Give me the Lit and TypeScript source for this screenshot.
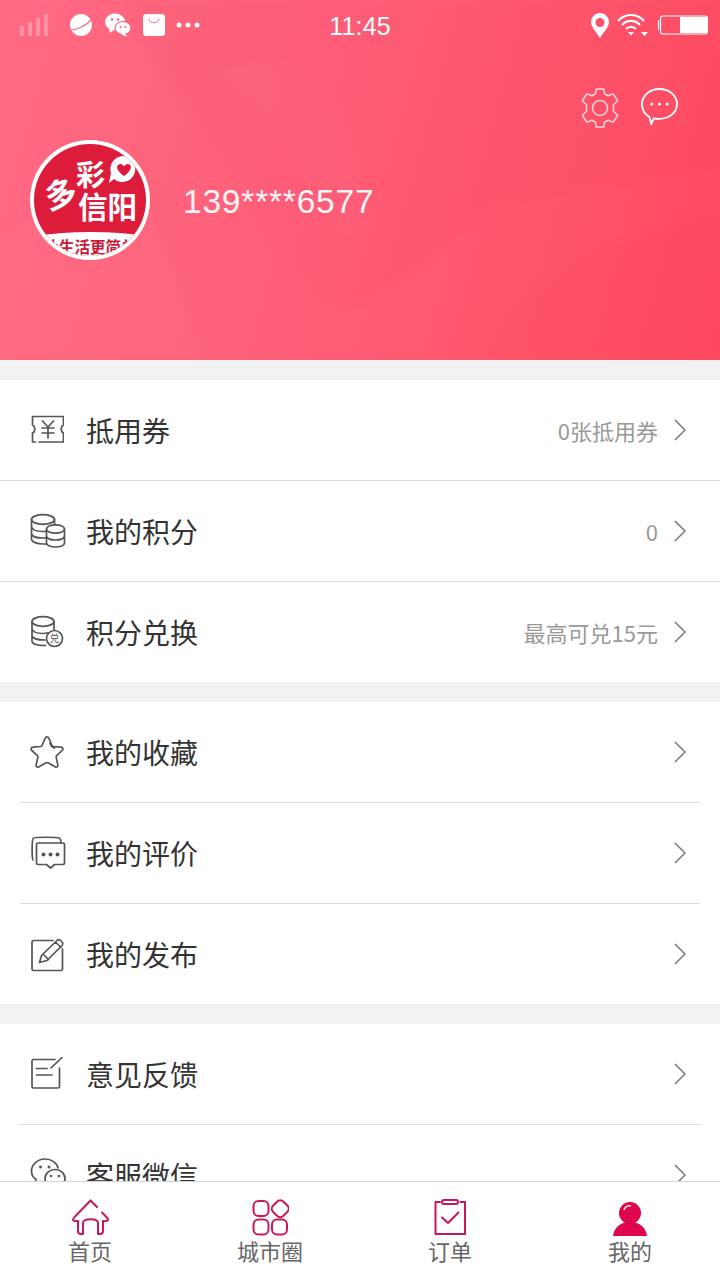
import { LitElement, html, css, svg } from "lit";
import { customElement } from "lit/decorators.js";

const stroke = (body: unknown, w = 34, h = 34, vb = "0 0 34 34") => html`<svg width=${w} height=${h} viewBox=${vb} fill="none" stroke="#555" stroke-width="1.7" stroke-linejoin="round" stroke-linecap="round">${body}</svg>`;

const icons: Record<string, unknown> = {
  ticket: stroke(svg`
    <path d="M5.500 29 H2.500 V20 C5.500 19 5.500 13 2.500 12 V3.500 H33.500 V12 C30.500 13 30.500 19 33.500 20 V29 H9"/>
    <path d="M12.500 8 L18 14 L23.500 8 M18 14 V25 M12 15 H24 M12 20 H24"/>`),
  coins: stroke(svg`
    <ellipse cx="13" cy="6.500" rx="11.500" ry="4.800"/>
    <path d="M1.500 6.500 V26 C1.500 29 7 31 13 31 C14 31 15 31 16.500 30.800 M1.500 13.500 C2 17 7 18.500 13 18.500 L16.500 18.300 M1.500 20.500 C2 23.500 7 25 13 25 L16.500 24.800 M24.500 6.500 V11.500"/>
    <ellipse cx="25.500" cy="16" rx="9" ry="4.200"/>
    <path d="M16.500 16 V30 C16.500 32.500 21 34 25.500 34 C30 34 34.500 32.500 34.500 30 V16 M16.500 23 C17 25.500 21 27 25.500 27 C30 27 34 25.500 34.500 23"/>`, 36, 36, "0 0 36 36"),
  exchange: stroke(svg`
    <ellipse cx="13" cy="6.500" rx="11" ry="4.800"/>
    <path d="M2 6.500 V26 C2 28.500 6.500 30.500 15.500 30.500 M2 13.500 C2.500 17 7 18.500 13 18.500 C15 18.500 16.500 18.300 18 17.800 M2 20.500 C2.500 23.500 6.500 25 15 25 M24 6.500 V15"/>
    <circle cx="24.500" cy="23.500" r="8"/>
    <text x="24.500" y="27" text-anchor="middle" font-size="10" fill="#555" stroke="none" font-family="Noto Sans CJK SC, sans-serif">兑</text>`),
  star: stroke(svg`<path d="M17 1.800 C18 1.800 18.600 2.600 19 3.500 L21.800 10.200 C22.100 11 22.700 11.400 23.500 11.500 L30.800 12.200 C33 12.500 33.500 14.300 32.200 15.500 L26.800 20.400 C26.200 21 26 21.600 26.200 22.400 L27.800 29.800 C28.200 31.700 26.800 32.800 25 31.800 L18.500 28 C17.500 27.500 16.500 27.500 15.600 28 L9 31.800 C7.200 32.800 5.800 31.700 6.200 29.800 L7.800 22.400 C8 21.600 7.800 21 7.200 20.400 L1.800 15.500 C.5 14.300 1 12.500 3.200 12.200 L10.500 11.500 C11.300 11.400 11.900 11 12.200 10.200 L15 3.500 C15.400 2.600 16 1.800 17 1.800 Z M20 8 C20.600 10.500 22 12 24.500 13" /> `),
  review: stroke(svg`
    <path d="M3 25 C2 24 1.500 4 3.500 3 C4 2 28 2 29 3 C30.500 3.500 31 5.500 31 8"/>
    <path d="M8 8 H33 C34 8 34.500 8.500 34.500 9.500 V28 C34.500 29 34 29.500 33 29.500 H24.500 L20.500 33 L16.500 29.500 H8 C7 29.500 6.500 29 6.500 28 V9.500 C6.500 8.500 7 8 8 8 Z"/>
    <circle cx="13.500" cy="19.500" r="2" fill="#555" stroke="none"/><circle cx="20.500" cy="19.500" r="2" fill="#555" stroke="none"/><circle cx="27.500" cy="19.500" r="2" fill="#555" stroke="none"/>`, 36, 36, "0 0 36 36"),
  publish: stroke(svg`
    <path d="M23 4.500 H3.500 C2.500 4.500 2 5 2 6 V33 C2 34 2.500 34.500 3.500 34.500 H31 C32 34.500 32.500 34 32.500 33 V13"/>
    <path d="M9.500 26.500 L11.500 19.500 L27 4.500 C28 3.500 29 3.500 30 4 L32.500 6.500 C33 7.500 33 8.500 32 9.500 L17 24.500 Z M13 18 L18.500 23.500 M25.500 6 L31 11.500"/>`, 36, 36, "0 0 36 36"),
  feedback: stroke(svg`
    <path d="M25 2.500 H3.500 C2.500 2.500 2 3 2 4 V29.500 C2 30.500 2.500 31 3.500 31 H28 C29 31 29.500 30.500 29.500 29.500 V11"/>
    <path d="M21 11 L32 .5 M6.500 11.500 H17 M6.500 18 H22"/>`),
  wechat: stroke(svg`
    <path d="M15 25 C13 25 11.500 24.800 10 24.500 L5 28 L6 22.500 C2.800 20.500 1.500 17 1.500 14 C1.500 7.500 7.500 2 15 2 C21.500 2 27 6 28 11"/>
    <ellipse cx="25" cy="21.500" rx="10" ry="9"/>
    <circle cx="10.500" cy="10" r="1.500" fill="#555" stroke="none"/><circle cx="19" cy="10" r="1.500" fill="#555" stroke="none"/>
    <circle cx="21" cy="19" r="1.300" fill="#555" stroke="none"/><circle cx="29" cy="19" r="1.300" fill="#555" stroke="none"/>`, 36, 36, "0 0 36 36"),
};

type Row = { icon: string; label: string; value?: string };

const groups: { inset: boolean; rows: Row[] }[] = [
  { inset: false, rows: [
    { icon: "ticket", label: "抵用券", value: "0张抵用券" },
    { icon: "coins", label: "我的积分", value: "0" },
    { icon: "exchange", label: "积分兑换", value: "最高可兑15元" },
  ] },
  { inset: true, rows: [
    { icon: "star", label: "我的收藏" },
    { icon: "review", label: "我的评价" },
    { icon: "publish", label: "我的发布" },
  ] },
  { inset: true, rows: [
    { icon: "feedback", label: "意见反馈" },
    { icon: "wechat", label: "客服微信" },
  ] },
];

const tabStroke = "#c8175a";
const tabs = [
  { label: "首页", icon: svg`<path d="M19.500 1.500 L6 15.500 C3 18.500 1.500 20 2 21 C2.500 22.500 7 22 7 22 V32 C7 34 8 35 10 35 H12 V24 C12 19 27 19 27 24 V35 H29 C31 35 32 34 32 32 V22 C32 22 36.500 22.500 37 21 C37.500 20 36 18.500 31 13.500 M19.500 1.500 L26 8"/>`, vb: "0 0 39 37", w: 39, h: 37 },
  { label: "城市圈", icon: svg`
    <rect x="1.500" y="2" width="15" height="15" rx="5"/>
    <rect x="21" y="2.500" width="14.500" height="14.500" rx="4.500" transform="rotate(45 28.250 9.750)"/>
    <rect x="1.500" y="20.500" width="15" height="15" rx="5"/>
    <rect x="20" y="20.500" width="15" height="15" rx="5"/>`, vb: "0 0 37 37", w: 37, h: 37 },
  { label: "订单", icon: svg`
    <path d="M6 3 H1.500 V35 H31 V3 H26.500"/>
    <rect x="8" y="1" width="16" height="4" rx="2"/>
    <path d="M8 18.500 L14 24 L24.500 13.500"/>`, vb: "0 0 33 37", w: 33, h: 37 },
];

@customElement("app-root")
export class AppRoot extends LitElement {
  static styles = css`
    :host { display: flex; flex-direction: column; width: 720px; height: 1280px; overflow: hidden; background: #f2f2f2;
      font-family: "Noto Sans CJK SC", "Liberation Sans", sans-serif; }
    .header { position: relative; flex: none; height: 360px; overflow: hidden; color: #fff; display: flex; flex-direction: column;
      background: linear-gradient(105deg, #ff6a82 0%, #ff5f79 45%, #ff4a60 100%); }
    .swirl { position: absolute; inset: 0; filter: blur(5px); }
    .status, .actions, .profile { position: relative; display: flex; }
    .status { height: 50px; padding: 0 12px 0 20px; justify-content: space-between; align-items: center; }
    .status-side { display: flex; align-items: center; width: 280px; }
    .status-right { width: 288px; justify-content: flex-end; }
    .clock { font-family: "Liberation Sans", sans-serif; font-size: 25px; letter-spacing: .2px; margin-top: 2px; }
    .actions { justify-content: flex-end; align-items: flex-start; gap: 21px; padding: 38px 42px 0 0; height: 40px; }
    .profile { align-items: center; padding: 12px 0 0 30px; gap: 33px; }
    .phone { font-family: "Liberation Sans", sans-serif; font-size: 33.500px; letter-spacing: .8px; margin-top: 3px; color: #fff4f6; }

    .logo { position: relative; width: 120px; height: 120px; border-radius: 50%; background: #fff; overflow: hidden; flex: none; }
    .disc { position: absolute; inset: 4px; border-radius: 50%; overflow: hidden; background: #dd1b3b; }
    .band { position: absolute; left: -18px; top: 88px; width: 150px; height: 70px; border-radius: 50% 50% 0 0 / 14px 14px 0 0; background: #fff; }
    .slogan { position: absolute; left: 0; width: 112px; text-align: center; top: 92px; font-size: 15.500px; font-weight: 700; color: #c8193a; white-space: nowrap; line-height: 20px; }
    .glyph { position: absolute; color: #fff; font-weight: 700; line-height: 1; white-space: nowrap; }
    .g-duo { left: 10px; top: 32px; font-size: 32px; transform: rotate(-16deg); }
    .g-cai { left: 42px; top: 15px; font-size: 29px; }
    .g-xy { left: 44px; top: 47px; font-size: 29.500px; }
    .pin { position: absolute; left: 75px; top: 11px; }

    .list { flex: 1; min-height: 0; overflow: hidden; padding-top: 20px; display: flex; flex-direction: column; gap: 20px; }
    .group { background: #fff; flex: none; }
    .row { height: 100px; display: flex; align-items: center; padding: 0 34px 0 30px; position: relative; }
    .row + .row { margin-top: 1px; }
    .row + .row::before { content: ""; position: absolute; left: 0; right: 0; top: -1px; height: 1px; background: #dcdcdc; }
    .inset .row + .row::before { left: 20px; right: 20px; }
    .row-icon { width: 56px; flex: none; display: flex; }
    .label { font-size: 28px; color: #333; flex: 1; }
    .value { font-size: 22px; color: #999; margin-right: 16px; margin-top: -1px; }
    .chev { flex: none; }

    .tabbar { flex: none; height: 99px; background: #fff; border-top: 1px solid #d4d4d4; display: grid; grid-template-columns: repeat(4, 1fr); box-sizing: border-box; }
    .tab { display: flex; flex-direction: column; align-items: center; padding-top: 16px; }
    .tab-icon { height: 38px; display: flex; align-items: flex-end; }
    .tab-label { font-size: 22px; line-height: 28px; color: #666; }
  `;

  private chevron() {
    return html`<svg class="chev" width="12" height="22" viewBox="0 0 12 22" fill="none" stroke="#777" stroke-width="1.500"><path d="M1 1 L11 11 L1 21"/></svg>`;
  }

  private statusLeft() {
    return html`
      <svg width="28" height="22" viewBox="0 0 28 22" fill="#fff" fill-opacity=".28"><rect x="0" y="12" width="4" height="10"/><rect x="8" y="8" width="4" height="14"/><rect x="16" y="4" width="4" height="18"/><rect x="24" y="0" width="4" height="22"/></svg>
      <svg style="margin-left:21px" width="24" height="24" viewBox="0 0 24 24"><circle cx="12" cy="12" r="11" fill="#fff"/><path d="M1 17 C8 17 18 12 23 6" stroke="#ff6480" stroke-width="1.200" fill="none"/></svg>
      <svg style="margin-left:12px" width="26" height="24" viewBox="0 0 26 24" fill="#fff"><ellipse cx="10" cy="9" rx="10" ry="8.500"/><path d="M4 14 L5 20 L10 16Z"/><ellipse cx="18" cy="15" rx="8" ry="6.500" stroke="#ff6480" stroke-width="1.200"/><path d="M20 20 L22 24 L16 21Z"/><circle cx="7" cy="6.500" r="1.300" fill="#ff6480"/><circle cx="13" cy="6.500" r="1.300" fill="#ff6480"/><circle cx="15.500" cy="14" r="1" fill="#ff6480"/><circle cx="20.500" cy="14" r="1" fill="#ff6480"/></svg>
      <svg style="margin-left:12px" width="22" height="22" viewBox="0 0 22 22"><rect width="22" height="22" rx="3" fill="#fff"/><path d="M6 5 C7 10 15 10 16 5" fill="none" stroke="#ff6480" stroke-width="1"/></svg>
      <svg style="margin-left:11px" width="24" height="6" viewBox="0 0 24 6" fill="#fff"><circle cx="3" cy="3" r="2.500"/><circle cx="12" cy="3" r="2.500"/><circle cx="21" cy="3" r="2.500"/></svg>`;
  }

  private statusRight() {
    return html`
      <svg width="18" height="25" viewBox="0 0 18 25"><path fill="#fff" fill-rule="evenodd" d="M9 0 C14 0 18 4 18 9 C18 14 12 20 9 25 C6 20 0 14 0 9 C0 4 4 0 9 0 Z M9 5 A4.500 4.500 0 1 0 9 14 A4.500 4.500 0 1 0 9 5 Z"/></svg>
      <svg style="margin-left:8px" width="32" height="22" viewBox="0 0 32 22" fill="none" stroke="#fff" stroke-width="2.200"><path d="M1 7 C8 -1 20 -1 27 7 M5 11 C10 5.500 18 5.500 23 11 M9 15 C12 12 16 12 19 15"/><path d="M11 18 H17 L14 21.500 Z M24 18 H31 L27.500 22 Z" fill="#fff" stroke="none"/></svg>
      <svg style="margin-left:7px" width="52" height="20" viewBox="0 0 52 20"><path d="M2.500 5 V15" stroke="#fff" stroke-width="1.200" fill="none"/><rect x="4.500" y="1" width="47" height="18" rx="2.500" fill="none" stroke="#fff" stroke-width="1.200"/><rect x="24" y="2" width="27" height="16" fill="#fff"/></svg>`;
  }

  private logo() {
    return html`<div class="logo"><div class="disc">
      <div class="band"></div>
      <div class="slogan">让生活更简单</div>
      <span class="glyph g-duo">多</span>
      <span class="glyph g-cai">彩</span>
      <span class="glyph g-xy">信阳</span>
      <svg class="pin" width="30" height="30" viewBox="0 0 30 30"><path d="M14 1 A13 13 0 1 1 5 24 L0 28 L2 18 A13 13 0 0 1 14 1 Z" fill="#fff"/><path d="M15 21 C8 16 7 12 9 10 C11 8 14 9 15 11.500 C16 9 19 8 21 10 C23 12 22 16 15 21 Z" fill="#dd1b3b"/></svg>
    </div></div>`;
  }

  render() {
    return html`
      <header class="header">
        <svg class="swirl" width="720" height="360" viewBox="0 0 720 360">
          <path opacity=".035" fill="#d01040" d="M130 0 C150 70 210 130 250 200 C280 260 310 310 350 306 C400 300 430 240 490 210 C560 175 650 190 720 160 V0 Z"/>
          <path opacity=".025" fill="#fff" d="M0 240 C50 210 90 190 130 200 C170 230 180 300 210 360 H0 Z"/>
          <path opacity=".025" fill="#fff" d="M210 70 C280 110 310 200 350 240 C390 200 340 100 290 60 Z"/>
          <path opacity=".02" fill="#c0143c" d="M480 360 C520 290 590 230 720 220 V360 Z"/>
        </svg>
        <div class="status">
          <div class="status-side">${this.statusLeft()}</div>
          <div class="clock">11:45</div>
          <div class="status-side status-right">${this.statusRight()}</div>
        </div>
        <div class="actions">
          <svg width="40" height="40" viewBox="0 0 40 40" fill="none" stroke="#fff" stroke-opacity=".75" stroke-width="1.600" stroke-linejoin="round">
            <path d="M16.500 1 C16 1 16 1 16 1.500 L15.500 5.800 L11.800 7.800 L7.500 6 C7 5.800 6.800 6 6.500 6.300 L2.500 12.500 C2.300 13 2.400 13.300 2.800 13.500 L6.500 16.500 V23.500 L2.800 26.500 C2.400 26.700 2.300 27 2.500 27.500 L6.500 33.700 C6.800 34 7 34.200 7.500 34 L11.800 32.200 L15.500 34.200 L16 38.500 C16 39 16 39 16.500 39 H23.500 C24 39 24 39 24 38.500 L24.500 34.200 L28.200 32.200 L32.500 34 C33 34.200 33.200 34 33.500 33.700 L37.500 27.500 C37.700 27 37.600 26.700 37.200 26.500 L33.500 23.500 V16.500 L37.200 13.500 C37.600 13.300 37.700 13 37.500 12.500 L33.500 6.300 C33.200 6 33 5.800 32.500 6 L28.200 7.800 L24.500 5.800 L24 1.500 C24 1 24 1 23.500 1 Z"/>
            <circle cx="20" cy="20" r="7.500"/>
          </svg>
          <svg width="37" height="37" viewBox="0 0 36 36" fill="none" stroke="#fff" stroke-width="1.800">
            <path d="M18 1 C27.500 1 35 7.500 35 15.500 C35 24 27.500 30 18 30 C16.500 30 14 30 12.500 29.500 L10 35 C9.500 32.500 9 30.500 8 28 C3.500 25.500 1 21 1 15.500 C1 7.500 8.500 1 18 1 Z"/>
            <g fill="#fff" stroke="none"><circle cx="10.500" cy="15.500" r="1.500"/><circle cx="18" cy="15.500" r="1.500"/><circle cx="25.500" cy="15.500" r="1.500"/></g>
          </svg>
        </div>
        <div class="profile">${this.logo()}<div class="phone">139****6577</div></div>
      </header>
      <main class="list">
        ${groups.map((g) => html`<section class="group ${g.inset ? "inset" : ""}">
          ${g.rows.map((r) => html`<div class="row">
            <div class="row-icon">${icons[r.icon]}</div>
            <div class="label">${r.label}</div>
            ${r.value ? html`<div class="value">${r.value}</div>` : ""}
            ${this.chevron()}
          </div>`)}
        </section>`)}
      </main>
      <nav class="tabbar">
        ${tabs.map((t) => html`<div class="tab">
          <div class="tab-icon"><svg width=${t.w} height=${t.h} viewBox=${t.vb} fill="none" stroke=${tabStroke} stroke-width="2" stroke-linejoin="round" stroke-linecap="round">${t.icon}</svg></div>
          <div class="tab-label">${t.label}</div>
        </div>`)}
        <div class="tab">
          <div class="tab-icon"><svg width="34" height="34" viewBox="0 0 34 34"><circle cx="17" cy="11" r="11" fill="#e0064e"/><path d="M11 8 C12 5 15 3.500 18 4" stroke="#fff" stroke-width="1.500" fill="none" opacity=".85"/><path d="M0 34 C1 26 7 20 17 20 C27 20 33 26 34 34 Z" fill="#e0064e"/></svg></div>
          <div class="tab-label">我的</div>
        </div>
      </nav>
    `;
  }
}
